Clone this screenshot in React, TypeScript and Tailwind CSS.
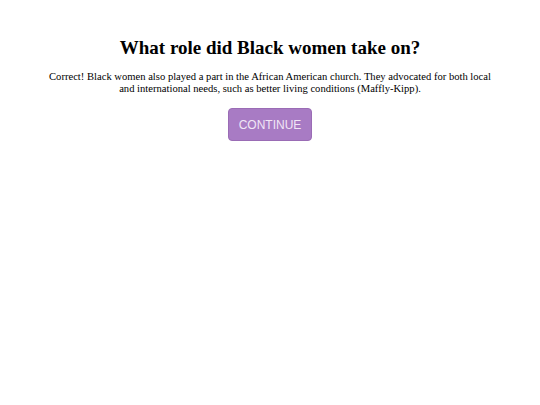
export default function App() {
  return (
    <div className="flex flex-col items-center bg-white pt-[37px] text-black" style={{ fontFamily: '"Liberation Serif", serif' }}>
      <h1 className="text-[19px] font-bold leading-[22px]">What role did Black women take on?</h1>
      <p className="mt-[12px] w-[448px] text-center text-[10.6px] leading-[12px]">
        Correct! Black women also played a part in the African American church. They advocated for both local and
        international needs, such as better living conditions (Maffly-Kipp).
      </p>
      <button className="mt-[13px] h-[33px] w-[84px] rounded-[4px] border border-[#9a6cb5] bg-[#a87bc4] text-[12px] text-[#f1e6f6] font-['Liberation_Sans',sans-serif]">
        CONTINUE
      </button>
    </div>
  )
}
